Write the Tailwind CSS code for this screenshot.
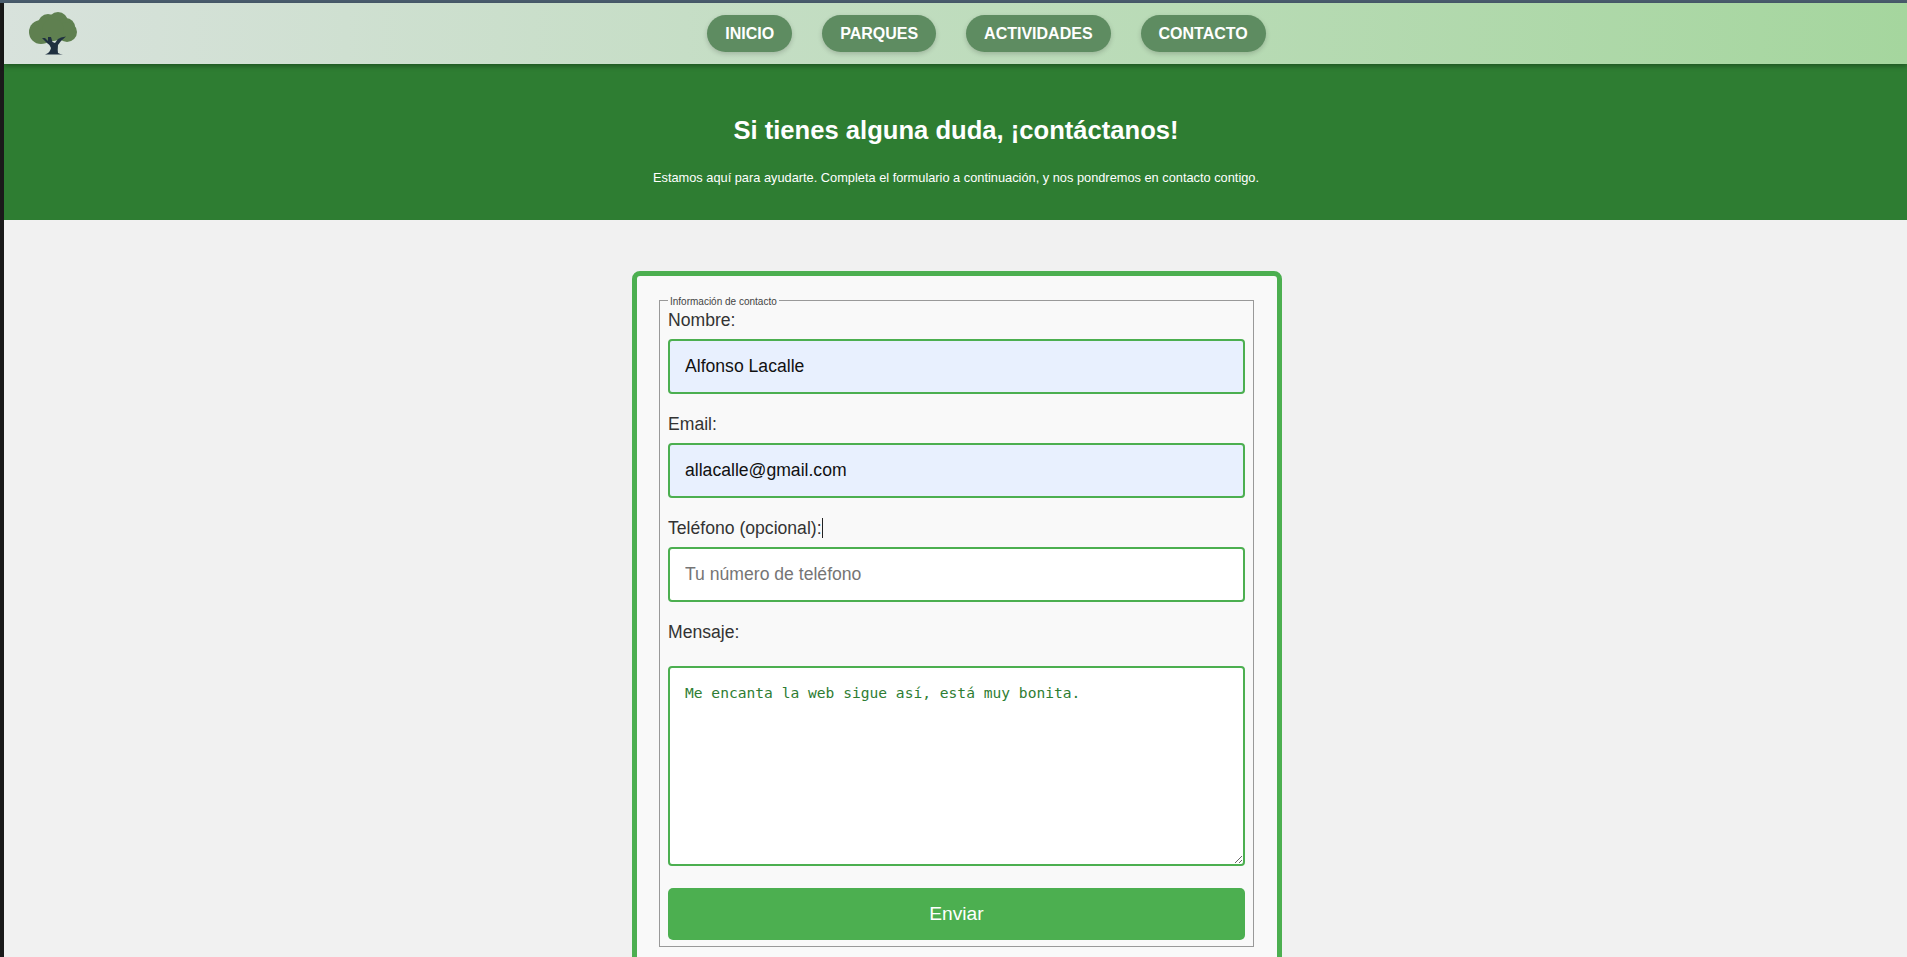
<!DOCTYPE html>
<html lang="es">
<head>
<meta charset="utf-8">
<title>Contacto</title>
<script src="https://cdn.jsdelivr.net/npm/@tailwindcss/browser@4"></script>
</head>
<body class="bg-[#f1f1f1] font-['Liberation_Sans',Arial,sans-serif] text-[#333]">
<div class="h-[957px] overflow-hidden flex flex-col">
  <div class="h-[3px] shrink-0 bg-[#4a5d6e]"></div>
  <div class="flex flex-1 min-h-0">
    <div class="w-[4px] shrink-0 bg-[#1a1a1a]"></div>
    <div class="flex-1 min-w-0">
      <header class="relative z-10 h-[61px] flex items-center justify-center gap-[30px] pl-[62px] bg-gradient-to-r from-[#d8e2dc] to-[#a5d69e] shadow-[0_2px_5px_rgba(0,0,0,0.35)]">
        <svg class="absolute left-[25px] top-[9px]" width="50" height="44" viewBox="0 0 50 44" aria-label="Logo">
          <g fill="#5f8050">
            <circle cx="12" cy="20" r="12"/>
            <circle cx="19" cy="12" r="10"/>
            <circle cx="29" cy="10" r="10"/>
            <circle cx="37" cy="15" r="9"/>
            <circle cx="38" cy="20" r="10"/>
            <circle cx="24" cy="18" r="11"/>
          </g>
          <path d="M16 42.5 Q21 41 22 36 Q21.5 33 18 31 L13 26 L16 26 L19 29 L19 25 L22 25 L23.5 30 L26 31 L29 27 L32 25.5 L37 24.5 L32 29 L29 33 Q28.5 38 29 41 Q31 42 34 42.5 Z" fill="#1f3040"/>
        </svg>
        <a href="#" class="h-[37px] flex items-center px-[18px] rounded-full bg-[#5e8c61] text-white font-bold text-base shadow-[0_2px_5px_rgba(0,0,0,0.18)]">INICIO</a>
        <a href="#" class="h-[37px] flex items-center px-[18px] rounded-full bg-[#5e8c61] text-white font-bold text-base shadow-[0_2px_5px_rgba(0,0,0,0.18)]">PARQUES</a>
        <a href="#" class="h-[37px] flex items-center px-[18px] rounded-full bg-[#5e8c61] text-white font-bold text-base shadow-[0_2px_5px_rgba(0,0,0,0.18)]">ACTIVIDADES</a>
        <a href="#" class="h-[37px] flex items-center px-[18px] rounded-full bg-[#5e8c61] text-white font-bold text-base shadow-[0_2px_5px_rgba(0,0,0,0.18)]">CONTACTO</a>
      </header>
      <section class="h-[156px] bg-[#2e7d32] text-white text-center pt-[51px] pl-[1px]">
        <h1 class="text-[25.6px] leading-[30px] font-bold">Si tienes alguna duda, ¡contáctanos!</h1>
        <p class="mt-[25px] text-[12.8px] leading-[16px]">Estamos aquí para ayudarte. Completa el formulario a continuación, y nos pondremos en contacto contigo.</p>
      </section>
      <main class="w-[650px] ml-[628px] mt-[51px] border-[5px] border-[#4caf50] rounded-[8px] bg-[#f9f9f9] pt-[18px] pl-[22px] pr-[23px] pb-[30px]">
        <form>
          <fieldset class="border border-[#999] px-[8px] pb-[6px] pt-[4px]">
            <legend class="px-[2px] text-[10px] leading-[12px] text-[#444] translate-y-[2px]">Información de contacto</legend>
            <label class="block text-[17.6px] leading-[20px] mb-[9px]">Nombre:</label>
            <input class="block w-full h-[55px] px-[15px] border-2 border-[#4caf50] rounded-[4px] bg-[#e8f0fe] text-[#111] text-[17.6px] mb-[20px]" value="Alfonso Lacalle">
            <label class="block text-[17.6px] leading-[20px] mb-[9px]">Email:</label>
            <input class="block w-full h-[55px] px-[15px] border-2 border-[#4caf50] rounded-[4px] bg-[#e8f0fe] text-[#111] text-[17.6px] mb-[20px]" value="allacalle@gmail.com">
            <label class="block text-[17.6px] leading-[20px] mb-[9px] relative">Teléfono (opcional):<span class="inline-block w-px h-[20px] bg-[#222] align-[-4px]"></span></label>
            <input class="block w-full h-[55px] px-[15px] border-2 border-[#4caf50] rounded-[4px] bg-white text-[#111] text-[17.6px] placeholder:text-[#757575] mb-[20px]" placeholder="Tu número de teléfono">
            <label class="block text-[17.6px] leading-[20px] mb-[24px]">Mensaje:</label>
            <textarea class="block w-full h-[200px] px-[15px] py-[15px] border-2 border-[#4caf50] rounded-[4px] bg-white text-[#2e7d32] font-['DejaVu_Sans_Mono',monospace] text-[14.6px] leading-[20px] mb-[22px]">Me encanta la web sigue así, está muy bonita.</textarea>
            <button type="button" class="block w-full h-[52px] rounded-[5px] bg-[#4caf50] text-white text-[19.2px]">Enviar</button>
          </fieldset>
        </form>
      </main>
    </div>
  </div>
</div>
</body>
</html>
